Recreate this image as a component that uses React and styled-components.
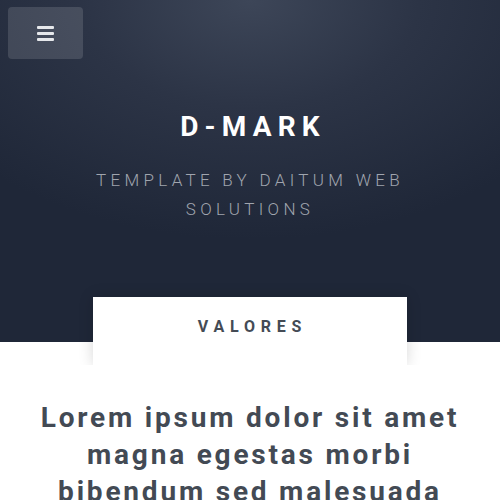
import styled, { createGlobalStyle } from 'styled-components'

const GlobalStyle = createGlobalStyle`
  html, body {
    margin: 0;
    padding: 0;
    background: #fff;
    font-family: Roboto, "Liberation Sans", sans-serif;
    overflow: hidden;
  }
`

export default function App() {
  return (
    <>
      <GlobalStyle />
      <Page>
        <Hero>
          <MenuButton aria-label="menu">
            <Bar />
            <Bar />
            <Bar />
          </MenuButton>
          <Title>D-MARK</Title>
          <Subtitle>Template by Daitum Web Solutions</Subtitle>
          <Tabs>
            <Tab>Valores</Tab>
          </Tabs>
        </Hero>
        <Content>
          <Heading>Lorem ipsum dolor sit amet magna egestas morbi bibendum sed malesuada</Heading>
        </Content>
      </Page>
    </>
  )
}

const Page = styled.div`
  width: 500px;
  height: 500px;
  overflow: hidden;
`

const Hero = styled.header`
  position: relative;
  z-index: 1;
  height: 342px;
  display: flex;
  flex-direction: column;
  align-items: center;
  box-sizing: border-box;
  padding-top: 110px;
  background: radial-gradient(ellipse 75% 70% at 50% 0%, #3d4658 0%, #2c3446 45%, #1f2738 100%);
`

const MenuButton = styled.button`
  position: absolute;
  top: 7px;
  left: 8px;
  width: 75px;
  height: 52px;
  border: none;
  border-radius: 4px;
  background: rgba(255, 255, 255, 0.13);
  display: flex;
  flex-direction: column;
  align-items: center;
  justify-content: center;
  gap: 3px;
  padding: 0;
`

const Bar = styled.span`
  display: block;
  width: 17px;
  height: 3px;
  background: #e6e8eb;
  border-radius: 1px;
`

const Title = styled.h1`
  margin: 0;
  color: #fff;
  font-size: 28px;
  font-weight: 700;
  letter-spacing: 6.2px;
  line-height: 34px;
  padding-left: 6px;
`

const Subtitle = styled.p`
  margin: 22px 0 0;
  width: 330px;
  text-align: center;
  color: #a0a5ae;
  font-size: 17px;
  font-weight: 300;
  letter-spacing: 4.3px;
  line-height: 29px;
  text-transform: uppercase;
`

const Tabs = styled.nav`
  position: absolute;
  left: 93px;
  right: 93px;
  top: 297px;
`

const Tab = styled.div`
  height: 68px;
  box-sizing: border-box;
  padding-top: 20px;
  padding-left: 5px;
  background: #fff;
  text-align: center;
  color: #444b55;
  font-size: 16px;
  font-weight: 700;
  letter-spacing: 5.8px;
  text-transform: uppercase;
  box-shadow: 0 0 14px rgba(0, 0, 0, 0.16);
  clip-path: inset(-20px -20px 0 -20px);
`

const Content = styled.section`
  padding: 57px 20px 0;
  text-align: center;
`

const Heading = styled.h2`
  margin: 0;
  color: #434a54;
  font-size: 28px;
  font-weight: 700;
  letter-spacing: 2.8px;
  line-height: 37px;
`
